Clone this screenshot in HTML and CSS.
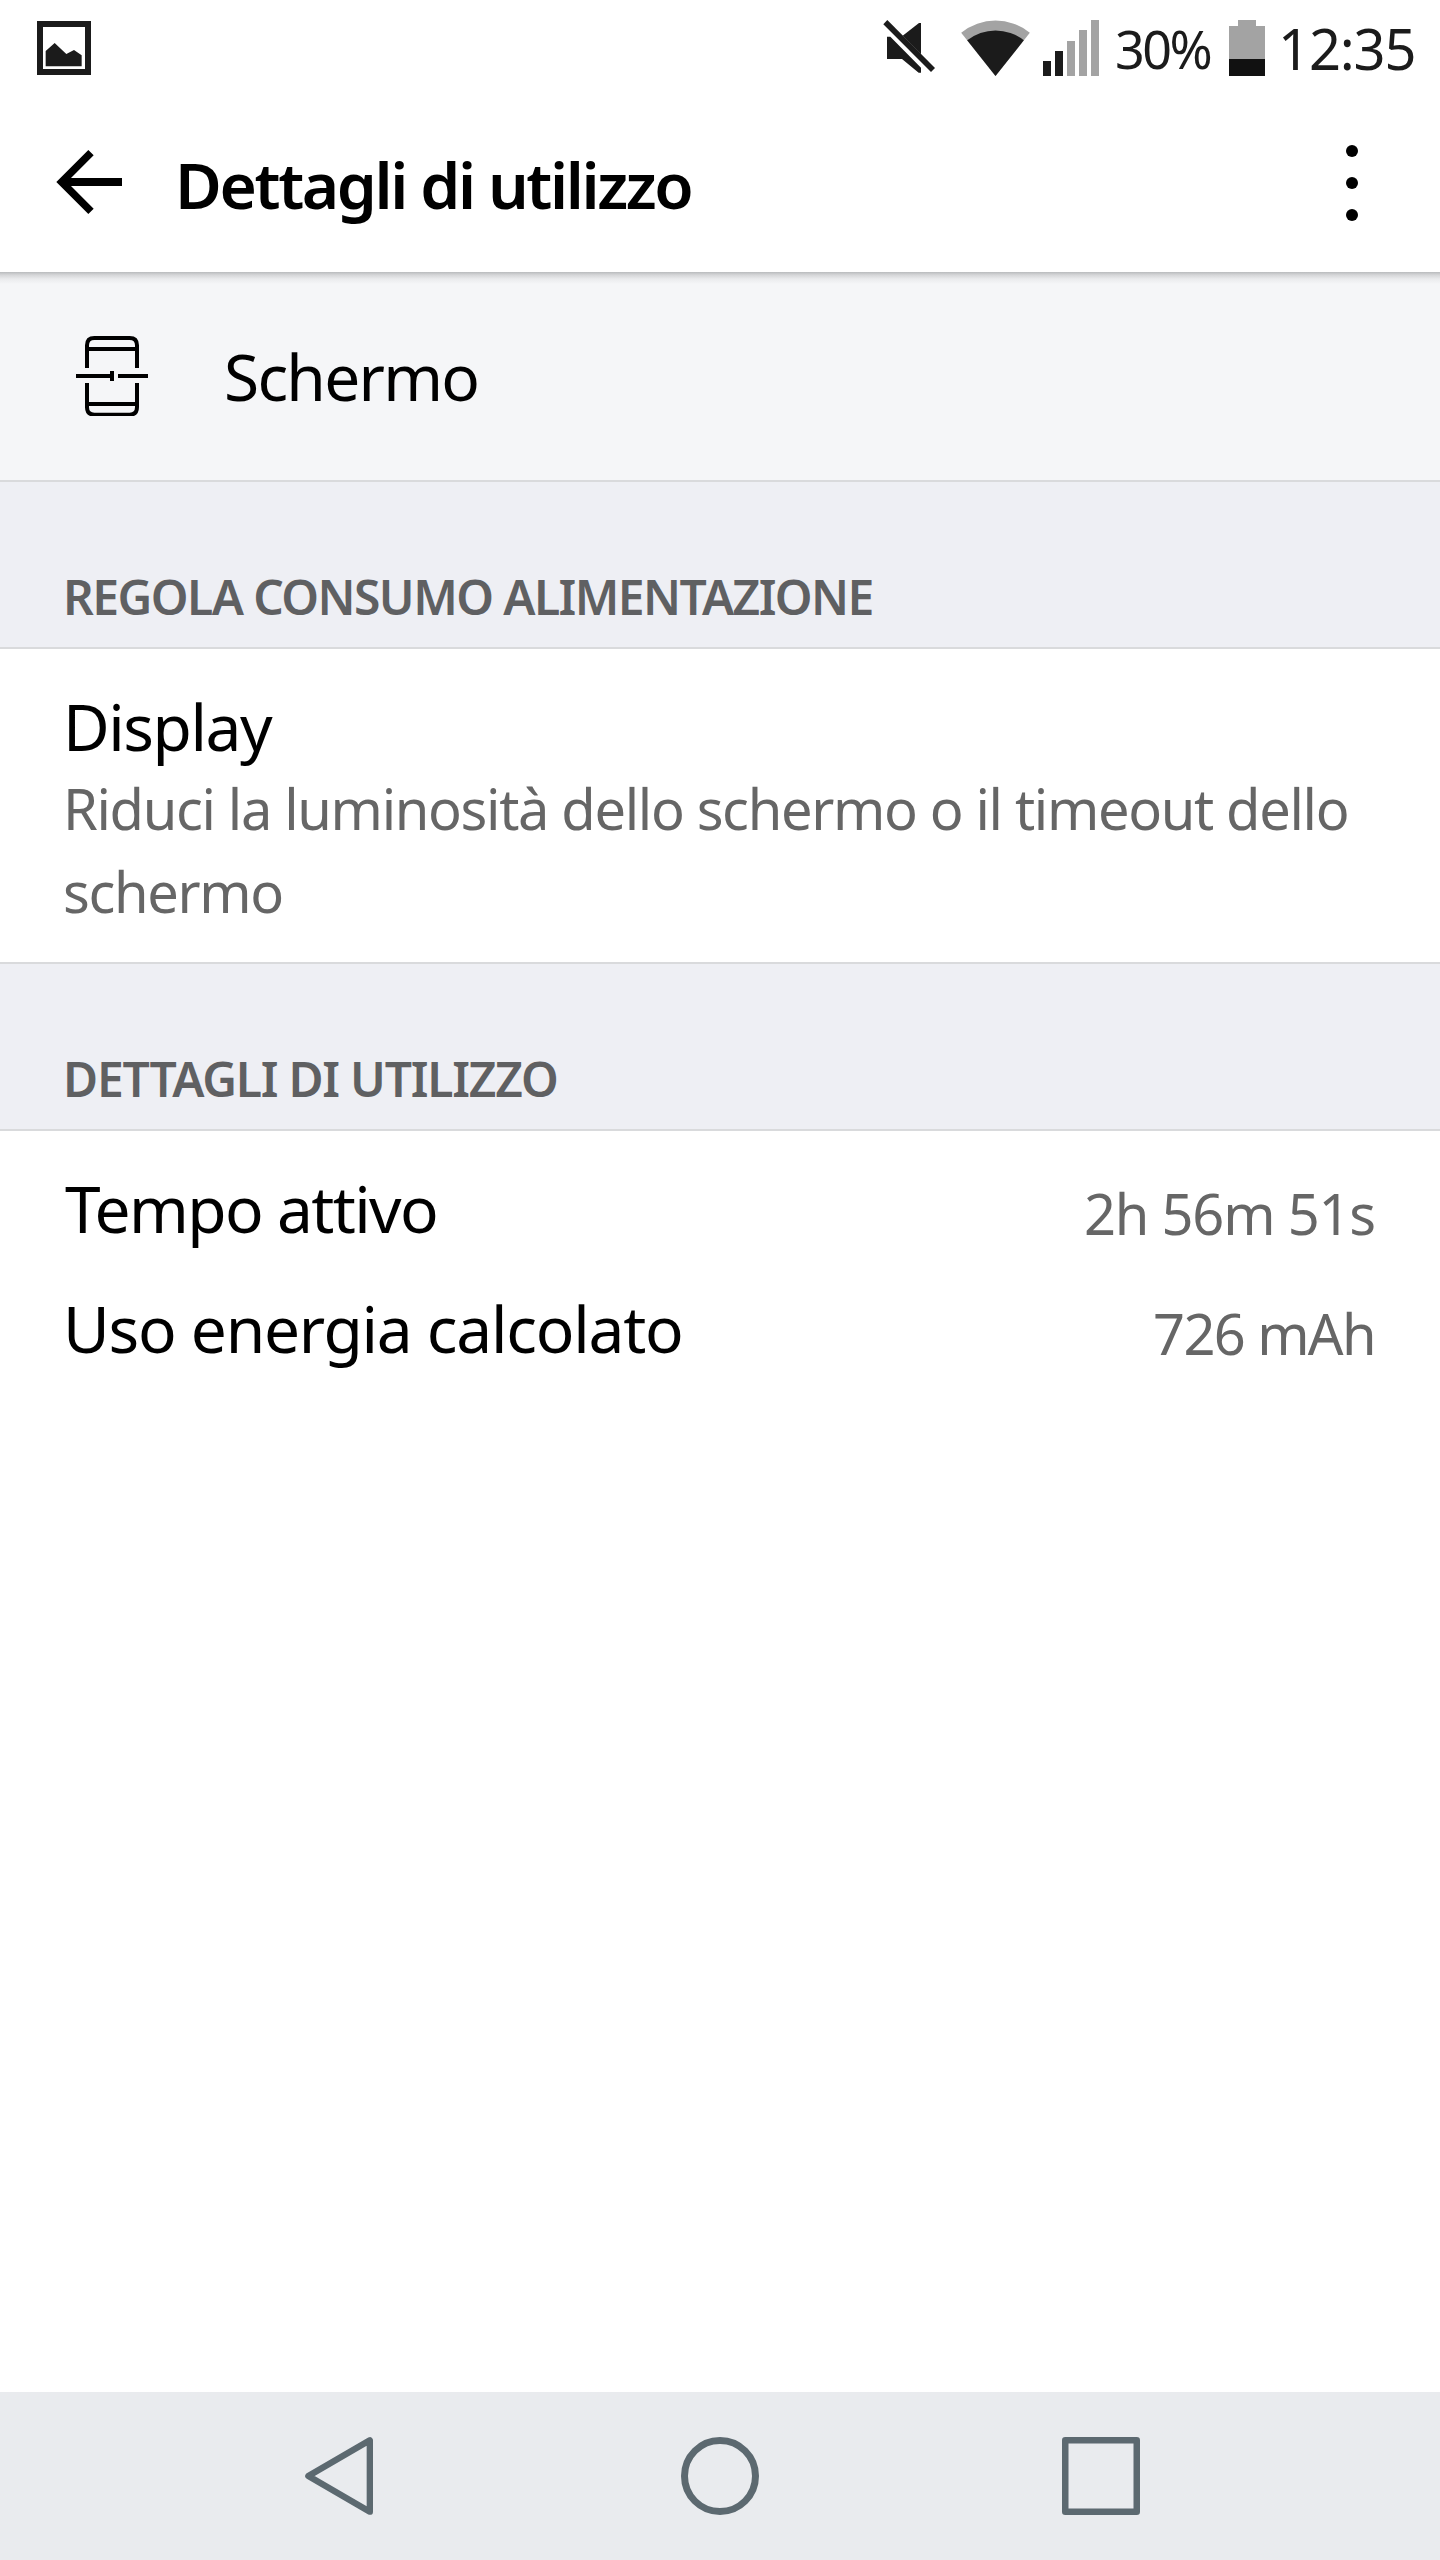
FILE: index.html
```html
<!DOCTYPE html>
<html lang="it">
<head>
<meta charset="utf-8">
<title>Dettagli di utilizzo</title>
<link rel="stylesheet" href="styles.css">
</head>
<body>
<div class="screen">
  <div class="status-bar">
    <svg class="icon-gallery" viewBox="0 0 162 162" fill="#1b1b1b">
      <path fill-rule="evenodd" d="M0 0H162V162H0ZM18 18V144H144V18Z"/>
      <path d="M26 136V90L53 66L88 99L111 87L134 103V136Z"/>
    </svg>
    <div class="status-right">
      <svg class="icon-mute" viewBox="69 60 156 168" fill="#1b1b1b">
        <path d="M82 60L225 204L213 216L70 73Z"/>
        <path d="M183 69H177L128 107L183 163Z"/>
        <path d="M81 110H91L183 203V218H176L126 177H81Z"/>
      </svg>
      <svg class="icon-wifi" viewBox="302 60 206 168">
        <path fill="#a3a3a3" d="M405 228L302 98A166 168 0 0 1 508 98Z"/>
        <path fill="#1b1b1b" d="M405 228L320 121A137 138 0 0 1 490 121Z"/>
      </svg>
      <svg class="icon-signal" viewBox="0 0 56 56">
        <path fill="#1b1b1b" d="M0 41h8v15H0zM12 31h8v25h-8z"/>
        <path fill="#a3a3a3" d="M24 21h8v35h-8zM36 10h8v46h-8zM48 0h8v56h-8z"/>
      </svg>
      <span class="battery-level">30%</span>
      <svg class="icon-battery" viewBox="0 0 36 56">
        <path fill="#a3a3a3" d="M9 0h18v6h9v33H0V6h9z"/>
        <path fill="#111" d="M0 39h36v17H0z"/>
      </svg>
      <span class="clock">12:35</span>
    </div>
  </div>

  <header class="app-bar">
    <svg class="icon-back" viewBox="168 450 198 192">
      <path d="M169 546L265 450L281 466L213 534H366V558H213L281 626L265 642Z"/>
    </svg>
    <h1 class="app-title">Dettagli di utilizzo</h1>
    <svg class="icon-more" viewBox="0 0 12 76">
      <circle cx="6" cy="6" r="6"/><circle cx="6" cy="38" r="6"/><circle cx="6" cy="70" r="6"/>
    </svg>
  </header>

  <main class="content">
    <div class="subject">
      <svg class="icon-display" viewBox="228 228 216 242" fill="none" stroke="#000" stroke-width="12">
        <path d="M261 324V256Q261 234 283 234H389Q411 234 411 256V324M261 267H411"/>
        <path d="M261 369V442Q261 464 283 464H389Q411 464 411 442V369M261 432H411"/>
        <path d="M228 348H342M336 333V363M354 348H444"/>
      </svg>
      <span class="subject-name">Schermo</span>
    </div>

    <h2 class="section-title section-title-power">REGOLA CONSUMO ALIMENTAZIONE</h2>
    <div class="item">
      <div class="item-title">Display</div>
      <div class="item-text">Riduci la luminosità dello schermo o il timeout dello schermo</div>
    </div>

    <h2 class="section-title section-title-usage">DETTAGLI DI UTILIZZO</h2>
    <div class="rows">
      <div class="row"><span class="row-label label-time">Tempo attivo</span><span class="row-value">2h 56m 51s</span></div>
      <div class="row"><span class="row-label">Uso energia calcolato</span><span class="row-value value-energy">726 mAh</span></div>
    </div>
  </main>

  <nav class="nav-bar">
    <svg class="nav-back" viewBox="75 171 204 234" fill="none" stroke="#5c6970" stroke-width="19" stroke-linejoin="round">
      <path d="M85 288L269.500 181V395Z"/>
    </svg>
    <svg class="nav-home" viewBox="0 0 78 78" fill="none" stroke="#5c6970" stroke-width="7">
      <circle cx="39" cy="39" r="35.500"/>
    </svg>
    <svg class="nav-recent" viewBox="0 0 78 78" fill="none" stroke="#5c6970" stroke-width="6.500" stroke-linejoin="round">
      <path d="M3.250 3.250H74.750V74.750H3.250Z"/>
    </svg>
  </nav>
</div>
</body>
</html>
```
FILE: styles.css
```css
* { box-sizing: border-box; }
body {
  margin: 0;
  background: #fff;
  color: #000;
  font-family: "Noto Sans", sans-serif;
}
svg { display: block; flex: none; }
.screen {
  display: flex;
  flex-direction: column;
  width: 1440px;
  height: 2560px;
  white-space: nowrap;
}

/* Status bar */
.status-bar {
  display: flex;
  align-items: center;
  justify-content: space-between;
  height: 96px;
  padding: 0 25px 0 37px;
  color: #1b1b1b;
}
.status-right { display: flex; align-items: center; }
.icon-gallery { width: 54px; height: 54px; }
.icon-mute { width: 52px; height: 56px; }
.icon-wifi { width: 69px; height: 56px; margin-left: 26px; }
.icon-signal { width: 56px; height: 56px; margin-left: 13px; }
.battery-level { width: 100px; margin-left: 16px; font-size: 52px; letter-spacing: -2.5px; }
.icon-battery { width: 36px; height: 56px; margin-left: 14px; }
.clock { width: 137px; margin-left: 13px; font-size: 56px; letter-spacing: -1.15px; }

/* App bar */
.app-bar {
  display: flex;
  align-items: center;
  height: 176px;
  padding: 0 82px 0 56px;
}
.icon-back { width: 66px; height: 64px; margin-bottom: 4px; }
.app-title {
  flex: 1;
  margin: 0 0 0 53px;
  font-size: 64px;
  font-weight: 600;
  letter-spacing: -2.38px;
}
.icon-more { width: 12px; height: 76px; margin-bottom: 2px; }

/* Content */
.content { flex: 1; }
.subject {
  display: flex;
  align-items: center;
  height: 210px;
  padding-left: 76px;
  background: linear-gradient(#b9bbbd, #d5d6d8 3px, #eaebed 7px, #f5f6f8 12px);
  border-bottom: 2px solid #d9dadc;
}
.icon-display { width: 72px; height: 80.667px; }
.subject-name { margin-left: 76px; font-size: 64px; letter-spacing: -1.75px; }
.section-title {
  height: 167px;
  margin: 0;
  padding: 85px 0 0 63px;
  background: #eeeff4;
  border-bottom: 2px solid #d9dadc;
  color: #5f6062;
  font-size: 48px;
  font-weight: 600;
  line-height: 60px;
}
.section-title-power { letter-spacing: -1.57px; }
.section-title-usage { letter-spacing: -1.25px; }
.item {
  padding: 38px 60px 0 63px;
  height: 315px;
  border-bottom: 2px solid #d9dadc;
}
.item-title { font-size: 64px; line-height: 80px; letter-spacing: -1.44px; }
.item-text {
  color: #666;
  font-size: 56px;
  line-height: 83px;
  letter-spacing: -1.34px;
  white-space: normal;
}
.rows { padding: 18px 65px 0 63px; }
.row { display: flex; justify-content: space-between; height: 120px; }
.row-label { font-size: 64px; line-height: 120px; letter-spacing: -1.24px; }
.label-time { letter-spacing: -1.63px; margin-left: 2px; }
.row-value { color: #666; font-size: 56px; line-height: 129px; letter-spacing: -1.2px; }
.value-energy { letter-spacing: -1.63px; }

/* Navigation bar */
.nav-bar {
  display: flex;
  align-items: center;
  height: 168px;
  padding-left: 305px;
  background: #e9ebee;
}
.nav-back { width: 68px; height: 78px; }
.nav-home { width: 78px; height: 78px; margin-left: 308px; }
.nav-recent { width: 78px; height: 78px; margin-left: 303px; }
```
